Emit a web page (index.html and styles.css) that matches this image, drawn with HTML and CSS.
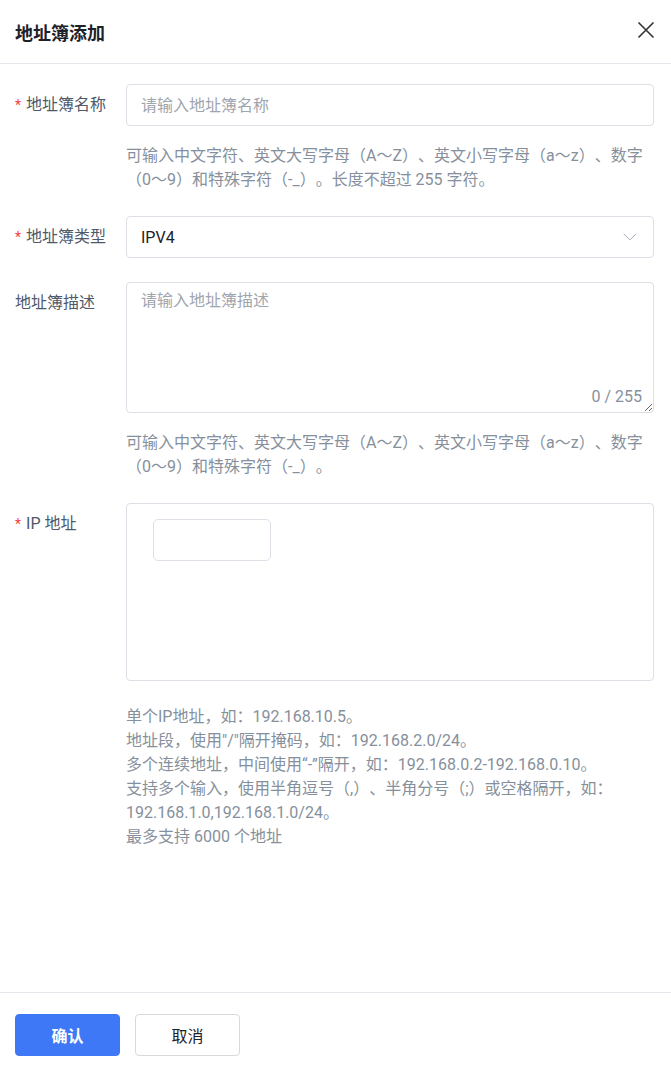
FILE: index.html
```html
<!DOCTYPE html>
<html lang="zh-CN">
<head>
    <meta charset="UTF-8">
    <meta name="viewport" content="width=device-width, initial-scale=1.0">
    <title>地址簿添加</title>
    <link rel="stylesheet" href="styles.css">
</head>
<body>

<div class="drawer">
    <div class="drawer-header">
        <h2>地址簿添加</h2>
        <button class="close-btn" type="button" aria-label="关闭">
            <svg width="18" height="18" viewBox="0 0 18 18">
                <path d="M1.5 1.5 L16.5 16.5 M16.5 1.5 L1.5 16.5" stroke="#333" stroke-width="1.6" fill="none"/>
            </svg>
        </button>
    </div>

    <form class="drawer-body" action="#" onsubmit="return false">
        <div class="form-row">
            <label class="form-label" for="name"><span class="req">*</span>地址簿名称</label>
            <div class="form-control">
                <input class="text-input" type="text" id="name" placeholder="请输入地址簿名称">
                <p class="hint">可输入中文字符、英文大写字母（A～Z）、英文小写字母（a～z）、数字（0～9）和特殊字符（-_）。长度不超过 255 字符。</p>
            </div>
        </div>

        <div class="form-row">
            <label class="form-label"><span class="req">*</span>地址簿类型</label>
            <div class="form-control">
                <div class="select">
                    <span>IPV4</span>
                    <svg width="14" height="8" viewBox="0 0 14 8">
                        <path d="M0.7 0.7 L7 6.8 L13.3 0.7" stroke="#a9aeb8" stroke-width="1" fill="none"/>
                    </svg>
                </div>
            </div>
        </div>

        <div class="form-row">
            <label class="form-label" for="desc">地址簿描述</label>
            <div class="form-control">
                <div class="textarea-wrap">
                    <textarea id="desc" placeholder="请输入地址簿描述"></textarea>
                    <span class="counter">0 / 255</span>
                </div>
                <p class="hint">可输入中文字符、英文大写字母（A～Z）、英文小写字母（a～z）、数字（0～9）和特殊字符（-_）。</p>
            </div>
        </div>

        <div class="form-row">
            <label class="form-label"><span class="req">*</span>IP 地址</label>
            <div class="form-control">
                <div class="tag-box">
                    <input class="tag-input" type="text">
                </div>
                <p class="hint">
                    单个IP地址，如：192.168.10.5。<br>
                    地址段，使用"/"隔开掩码，如：192.168.2.0/24。<br>
                    多个连续地址，中间使用“-”隔开，如：192.168.0.2-192.168.0.10。<br>
                    支持多个输入，使用半角逗号（,）、半角分号（;）或空格隔开，如：<br>
                    192.168.1.0,192.168.1.0/24。<br>
                    最多支持 6000 个地址
                </p>
            </div>
        </div>
    </form>

    <div class="drawer-footer">
        <button class="btn btn-primary" type="button">确认</button>
        <button class="btn" type="button">取消</button>
    </div>
</div>

</body>
</html>
```

FILE: styles.css
```css
/* Global */
body {
    margin: 0;
    padding: 0;
    background: #fff;
    font-family: Roboto, "Noto Sans CJK SC", sans-serif;
    font-size: 16px;
    color: #1d2129;
    text-spacing-trim: space-all;
}

.drawer {
    display: flex;
    flex-direction: column;
    height: 100vh;
}

/* Header */
.drawer-header {
    height: 63px;
    flex-shrink: 0;
    display: flex;
    align-items: center;
    justify-content: space-between;
    padding: 0 16px 0 15px;
    border-bottom: 1px solid #e5e6eb;
}

.drawer-header h2 {
    margin: 0;
    font-size: 18px;
    font-weight: 700;
    color: #1d2129;
}

.close-btn {
    display: flex;
    padding: 0;
    border: none;
    background: none;
    cursor: pointer;
    margin-top: -4px;
}

/* Body */
.drawer-body {
    flex: 1;
    padding: 20px 17px 0 15px;
}

.form-row {
    display: grid;
    grid-template-columns: 111px 1fr;
    margin-bottom: 24px;
}

.form-label {
    line-height: 42px;
    color: #4e5969;
    white-space: nowrap;
}

.req {
    color: #f53f3f;
    margin-right: 5px;
    font-size: 14px;
}

.text-input,
.select,
textarea,
.tag-box {
    width: 100%;
    box-sizing: border-box;
    border: 1px solid #dcdfe6;
    border-radius: 4px;
    background: #fff;
    font-family: inherit;
    font-size: 16px;
    color: #1d2129;
}

.text-input {
    height: 42px;
    padding: 0 14px;
    outline: none;
}

::placeholder {
    color: #a0a5ae;
}

.select {
    height: 42px;
    padding: 0 16px 0 14px;
    display: flex;
    align-items: center;
    justify-content: space-between;
}

.textarea-wrap {
    position: relative;
}

textarea {
    display: block;
    height: 131px;
    padding: 6px 14px;
    resize: vertical;
    outline: none;
    line-height: 24px;
}

.counter {
    position: absolute;
    right: 12px;
    bottom: 5px;
    color: #86909c;
    line-height: 22px;
}

.tag-box {
    height: 178px;
    padding: 15px 26px;
}

.tag-input {
    width: 118px;
    height: 42px;
    box-sizing: border-box;
    border: 1px solid #dcdfe6;
    border-radius: 5px;
    outline: none;
}

.hint {
    margin: 18px 0 0;
    color: #86909c;
    line-height: 24px;
}

.form-row:last-child .hint {
    margin-top: 24px;
}

/* Footer */
.drawer-footer {
    flex-shrink: 0;
    border-top: 1px solid #e5e6eb;
    padding: 21px 15px 14px;
    display: flex;
    gap: 15px;
}

.btn {
    width: 105px;
    height: 42px;
    border: 1px solid #d9d9d9;
    border-radius: 4px;
    background: #fff;
    font-family: inherit;
    font-size: 16px;
    color: #1d2129;
    cursor: pointer;
}

.btn-primary {
    background: #3f78f7;
    border-color: #3f78f7;
    color: #fff;
    font-weight: 700;
}
```
